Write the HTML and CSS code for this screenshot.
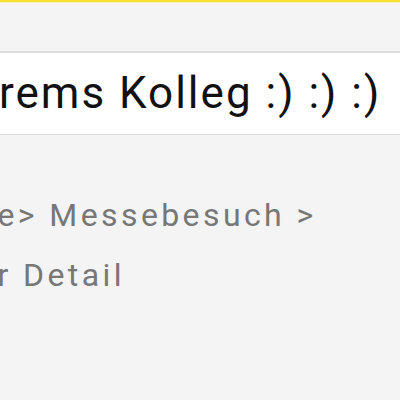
FILE: index.html
```html
<!DOCTYPE html>
<html>
<head>
<meta charset="utf-8">
<link rel="stylesheet" href="styles.css">
</head>
<body>
<div class="topbar"></div>
<div class="header">
  <div class="title">rems Kolleg :) :) :)</div>
</div>
<div class="crumbs">
  <div class="crumb-line">e&gt; Messebesuch &gt;</div>
  <div class="crumb-line">r Detail</div>
</div>
</body>
</html>
```
FILE: styles.css
```css
html, body {
  margin: 0;
  padding: 0;
  background: #f4f4f4;
  font-family: Roboto, "Liberation Sans", sans-serif;
  overflow: hidden;
}
.topbar {
  height: 2px;
  background: #f6e12f;
  border-bottom: 1px solid #fbf3b0;
}
.header {
  margin-top: 48px;
  border-top: 2px solid #dcdcdc;
  border-bottom: 1px solid #dcdcdc;
  background: #ffffff;
  height: 81px;
  box-sizing: content-box;
}
.title {
  font-size: 44px;
  color: #111111;
  line-height: 81px;
  white-space: nowrap;
  margin-left: -1px;
  letter-spacing: 2px;
}
.crumbs {
  margin-top: 50px;
  margin-left: -2.5px;
  color: #777777;
  font-size: 32px;
  letter-spacing: 3.4px;
  line-height: 60px;
}
.crumb-line {
  white-space: nowrap;
}
```
